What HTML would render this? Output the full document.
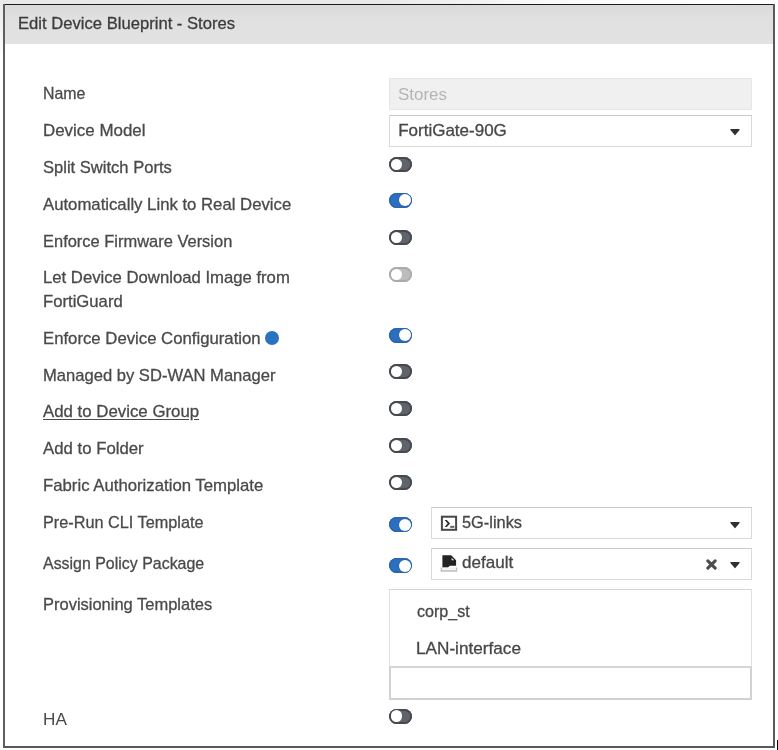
<!DOCTYPE html>
<html><head><meta charset="utf-8">
<style>
html,body{margin:0;padding:0;}
body{width:778px;height:750px;position:relative;overflow:hidden;background:#fff;font-family:"Liberation Sans",sans-serif;}
.t{position:absolute;white-space:nowrap;transform-origin:0 0;-webkit-text-stroke:0.3px currentColor;}
.topstrip{position:absolute;left:0;top:0;width:778px;height:4px;background:linear-gradient(90deg,#e8e8e8,#e9e9e9 380px,#f9f9f9 540px,#fff 778px);}
.leftstrip{position:absolute;left:0;top:0;width:3px;height:60px;background:linear-gradient(#e8e8e8,#f4f4f4 30px,#fff);}
.dlg{position:absolute;left:3px;top:4px;width:770px;height:742px;border:2px solid #2e2e2e;border-top-width:1.5px;box-sizing:content-box;}
.hdr{position:absolute;left:5px;top:5px;width:768px;height:39.3px;background:linear-gradient(#d9d9d9,#e0e0e0 35%,#e2e2e2);}
.inp{position:absolute;box-sizing:border-box;border:1px solid #d9d9d9;border-top-color:#c9c9c9;background:#fff;}
.tg{position:absolute;width:23px;height:15px;border-radius:7.5px;background:#5f636a;box-shadow:inset 0 0 0 1.9px #46494f;}
.tg i{position:absolute;left:1.9px;top:1.9px;width:11.2px;height:11.2px;border-radius:50%;background:#fff;}
.tg.on{background:#2b6fbe;box-shadow:inset 0 0 0 1.5px #2a66b0;}
.tg.on i{left:9.6px;top:1.5px;width:12px;height:12px;box-shadow:0 0 0 0.5px #2a63aa;}
.tg.dis{background:#bdbdbd;box-shadow:inset 0 0 0 1.9px #ababab;}
.arr{position:absolute;width:12px;height:9px;}
.mark{position:absolute;left:776.6px;top:740px;width:1.4px;height:10px;background:#000;}
</style></head><body>
<div id="wrap" style="position:absolute;left:0;top:0;width:778px;height:750px;filter:blur(0.4px)">
<div class="topstrip"></div>
<div class="leftstrip"></div>
<div class="hdr"></div>
<div style="position:absolute;left:3px;top:3.5px;width:772px;height:1.6px;background:#1c1c1c"></div>
<div style="position:absolute;left:3px;top:4px;width:2px;height:744px;background:#5e5e5e"></div>
<div style="position:absolute;left:773px;top:4px;width:2px;height:744px;background:#5a5a5a"></div>
<div style="position:absolute;left:3px;top:746px;width:772px;height:2px;background:#585858"></div>
<div class="inp" style="left:389px;top:78px;width:363px;height:32px;background:#f0f0f0;border-color:#e6e6e6"></div>
<div class="inp" style="left:389px;top:115px;width:363px;height:32px;"></div>
<svg class="arr" style="left:729px;top:128.0px" viewBox="0 0 12 9"><path d="M2 1.6 H10 L6 6.4 Z" fill="#303030" stroke="#303030" stroke-width="1.4" stroke-linejoin="round"/></svg>
<div class="inp" style="left:431px;top:507px;width:321px;height:32px;"></div>
<svg class="arr" style="left:729px;top:520.5px" viewBox="0 0 12 9"><path d="M2 1.6 H10 L6 6.4 Z" fill="#303030" stroke="#303030" stroke-width="1.4" stroke-linejoin="round"/></svg>
<div class="inp" style="left:431px;top:548px;width:321px;height:32px;"></div>
<svg class="arr" style="left:729px;top:561.0px" viewBox="0 0 12 9"><path d="M2 1.6 H10 L6 6.4 Z" fill="#303030" stroke="#303030" stroke-width="1.4" stroke-linejoin="round"/></svg>
<svg style="position:absolute;left:705px;top:558px" width="13" height="13" viewBox="0 0 13 13"><path d="M2.8 2.8 L10.2 10.2 M10.2 2.8 L2.8 10.2" stroke="#4e4e4e" stroke-width="3.1" stroke-linecap="round"/></svg>
<svg style="position:absolute;left:436px;top:510px" width="26" height="26" viewBox="0 0 26 26"><rect x="5.9" y="6.7" width="14.2" height="13.1" fill="#fff" stroke="#474747" stroke-width="2"/><path d="M8.6 9.9 H10.9 L14.1 13.4 L10.9 16.9 H8.6 L11.6 13.4 Z" fill="#333"/><rect x="14.2" y="15.8" width="4.2" height="2.1" fill="#666"/></svg>
<svg style="position:absolute;left:436px;top:550px" width="26" height="26" viewBox="0 0 26 26"><path d="M6.4 5.2 H15.2 L20.1 10.2 V15.8 H13.8 L12 17.4 H6.4 Z" fill="#232323"/><path d="M15.6 7.8 L18.2 10.2 H15.6 Z" fill="#eee"/><path d="M5.3 17.6 V21 H20.6 V17.6" fill="#f4f4f4" stroke="#bdbdbd" stroke-width="1.3"/></svg>
<div class="inp" style="left:389px;top:589px;width:363px;height:79px;border-color:#e0e0e0;border-top-color:#d6d6d6"></div>
<div style="position:absolute;left:389.4px;top:666px;width:362.6px;height:34.2px;box-sizing:border-box;border:2px solid #d2d2d2;border-top-color:#d6d6d6;background:#fff"></div>
<div style="position:absolute;left:264.6px;top:330.8px;width:14px;height:14px;border-radius:50%;background:#2a72c0"></div>
<div class="t" style="left:43.00px;top:85.31px;font-size:17.0px;line-height:17.0px;color:#4a4a4a;transform:scaleX(0.9333);">Name</div>
<div class="t" style="left:43.00px;top:122.31px;font-size:17.0px;line-height:17.0px;color:#4a4a4a;transform:scaleX(0.9951);">Device Model</div>
<div class="t" style="left:43.00px;top:159.31px;font-size:17.0px;line-height:17.0px;color:#4a4a4a;transform:scaleX(0.9735);">Split Switch Ports</div>
<div class="t" style="left:42.80px;top:196.01px;font-size:17.0px;line-height:17.0px;color:#4a4a4a;transform:scaleX(0.9839);">Automatically Link to Real Device</div>
<div class="t" style="left:42.70px;top:232.51px;font-size:17.0px;line-height:17.0px;color:#4a4a4a;transform:scaleX(0.9680);">Enforce Firmware Version</div>
<div class="t" style="left:43.00px;top:269.31px;font-size:17.0px;line-height:17.0px;color:#4a4a4a;transform:scaleX(0.9820);">Let Device Download Image from</div>
<div class="t" style="left:43.00px;top:293.01px;font-size:17.0px;line-height:17.0px;color:#4a4a4a;transform:scaleX(0.9812);">FortiGuard</div>
<div class="t" style="left:43.30px;top:329.51px;font-size:17.0px;line-height:17.0px;color:#4a4a4a;transform:scaleX(0.9841);">Enforce Device Configuration</div>
<div class="t" style="left:43.00px;top:366.71px;font-size:17.0px;line-height:17.0px;color:#4a4a4a;transform:scaleX(0.9752);">Managed by SD-WAN Manager</div>
<div class="t" style="left:42.80px;top:403.01px;font-size:17.0px;line-height:17.0px;color:#4a4a4a;transform:scaleX(0.9894);text-decoration:underline;text-underline-offset:2px;">Add to Device Group</div>
<div class="t" style="left:43.20px;top:440.31px;font-size:17.0px;line-height:17.0px;color:#4a4a4a;transform:scaleX(0.9864);">Add to Folder</div>
<div class="t" style="left:43.00px;top:477.31px;font-size:17.0px;line-height:17.0px;color:#4a4a4a;transform:scaleX(0.9852);">Fabric Authorization Template</div>
<div class="t" style="left:43.00px;top:514.01px;font-size:17.0px;line-height:17.0px;color:#4a4a4a;transform:scaleX(0.9559);">Pre-Run CLI Template</div>
<div class="t" style="left:43.00px;top:554.71px;font-size:17.0px;line-height:17.0px;color:#4a4a4a;transform:scaleX(0.9372);">Assign Policy Package</div>
<div class="t" style="left:43.00px;top:596.01px;font-size:17.0px;line-height:17.0px;color:#4a4a4a;transform:scaleX(0.9692);">Provisioning Templates</div>
<div class="t" style="left:42.60px;top:710.81px;font-size:17.0px;line-height:17.0px;color:#4a4a4a;transform:scaleX(1.0087);-webkit-text-stroke:0;">HA</div>
<div class="t" style="left:18.00px;top:15.01px;font-size:17.0px;line-height:17.0px;color:#3c3c3c;transform:scaleX(0.9775);">Edit Device Blueprint - Stores</div>
<div class="t" style="left:398.30px;top:86.21px;font-size:17.0px;line-height:17.0px;color:#b4b4b4;transform:scaleX(0.9958);-webkit-text-stroke:0;">Stores</div>
<div class="t" style="left:398.20px;top:121.51px;font-size:17.0px;line-height:17.0px;color:#474747;transform:scaleX(1.0000);">FortiGate-90G</div>
<div class="t" style="left:461.60px;top:513.61px;font-size:17.0px;line-height:17.0px;color:#474747;transform:scaleX(0.9629);">5G-links</div>
<div class="t" style="left:461.60px;top:554.11px;font-size:17.0px;line-height:17.0px;color:#474747;transform:scaleX(1.0033);">default</div>
<div class="t" style="left:417.00px;top:602.61px;font-size:17.0px;line-height:17.0px;color:#474747;transform:scaleX(0.9464);">corp_st</div>
<div class="t" style="left:416.00px;top:640.01px;font-size:17.0px;line-height:17.0px;color:#474747;transform:scaleX(1.0097);">LAN-interface</div>
<div class="tg" style="left:389px;top:157.0px"><i></i></div>
<div class="tg on" style="left:389px;top:192.7px"><i></i></div>
<div class="tg" style="left:389px;top:230.0px"><i></i></div>
<div class="tg dis" style="left:389px;top:266.8px"><i></i></div>
<div class="tg on" style="left:389px;top:327.5px"><i></i></div>
<div class="tg" style="left:389px;top:363.8px"><i></i></div>
<div class="tg" style="left:389px;top:401.0px"><i></i></div>
<div class="tg" style="left:389px;top:438.0px"><i></i></div>
<div class="tg" style="left:389px;top:475.0px"><i></i></div>
<div class="tg on" style="left:389px;top:517.2px"><i></i></div>
<div class="tg on" style="left:389px;top:558.1px"><i></i></div>
<div class="tg" style="left:389px;top:708.5px"><i></i></div>
<div class="mark"></div>
</div>
</body></html>
